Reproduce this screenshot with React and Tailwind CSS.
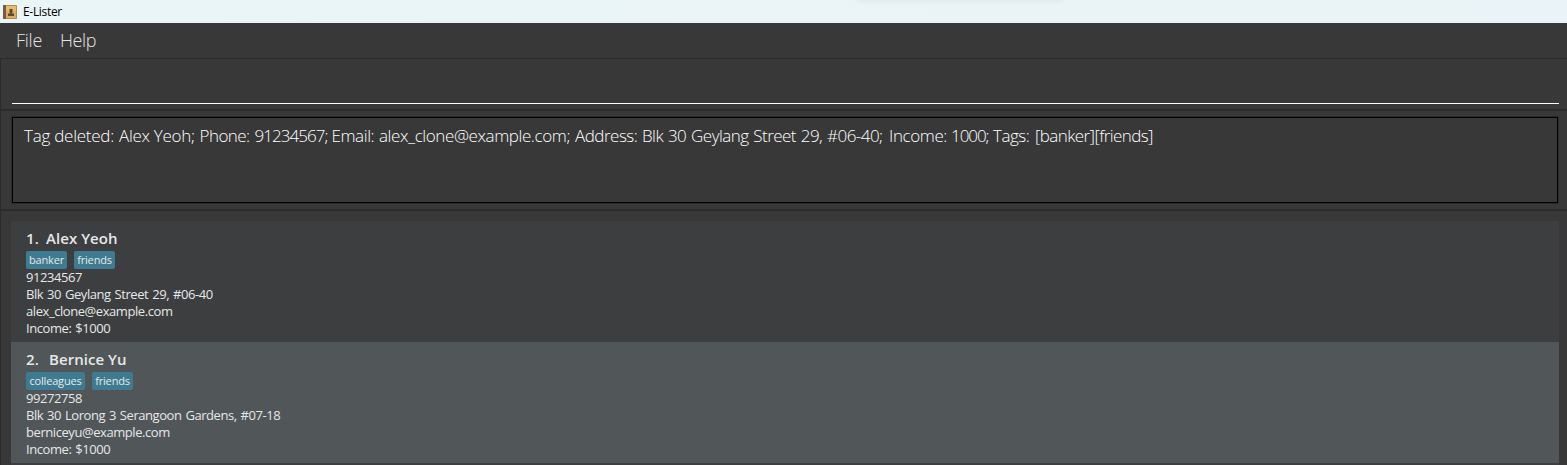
const people = [
  {
    id: '1.',
    name: 'Alex Yeoh',
    tags: [['banker', 'w-[41px]'], ['friends', 'w-[41px]']],
    lines: ['91234567', 'Blk 30 Geylang Street 29, #06-40', 'alex_clone@example.com', 'Income: $1000'],
    bg: 'bg-[#3c3e3f]',
    gap: 'w-5',
  },
  {
    id: '2.',
    name: 'Bernice Yu',
    tags: [['colleagues', 'w-[59px]'], ['friends', 'w-[41px]']],
    lines: ['99272758', 'Blk 30 Lorong 3 Serangoon Gardens, #07-18', 'berniceyu@example.com', 'Income: $1000'],
    bg: 'bg-[#515658]',
    gap: 'w-[23px]',
  },
];

const message = [
  ['Tag deleted: ', 'w-[95px] tracking-[-0.25px]'],
  ['Alex Yeoh; ', 'w-[80.5px] tracking-[-0.3px]'],
  ['Phone: ', 'w-[55px] tracking-[-0.55px]'],
  ['91234567; ', 'w-[77px] tracking-[-0.95px]'],
  ['Email: ', 'w-[47.5px] tracking-[-0.4px]'],
  ['alex_clone@example.com; ', 'w-[196px] tracking-[-0.4px]'],
  ['Address: ', 'w-[67px] tracking-[-0.5px]'],
  ['Blk 30 Geylang Street 29, #06-40; ', 'w-[247px] tracking-[-0.55px] [word-spacing:1px]'],
  ['Income: ', 'w-[62px] tracking-[-0.4px]'],
  ['1000; ', 'w-[42px] tracking-[-1.05px]'],
  ['Tags: ', 'w-[42px] tracking-[-0.5px]'],
  ['[banker][friends]', 'tracking-[-0.6px]'],
];

function BookIcon() {
  return (
    <svg className="ml-[3px] mr-[6px] h-[14px] w-[14px] shrink-0" viewBox="0 0 14 14">
      <rect width="14" height="14" rx="0.7" fill="#b98b49" />
      <rect x="3" y="1" width="10" height="12" fill="#dcab60" />
      <rect x="3" y="1" width="10" height="5" fill="#e4b970" />
      <rect width="3" height="14" rx="0.5" fill="#765c3d" />
      <path d="M6.500 4h3v3l-.6 1v.5H11V11H5V8.500h2.100V8l-.6-1z" fill="#5b4930" />
    </svg>
  );
}

function PersonCard({ person }) {
  return (
    <li className={`h-[121px] px-[15px] pt-[6px] text-[#e6e8e8] ${person.bg}`}>
      <div className="flex h-[22px] items-center text-[15px] font-semibold tracking-[0.05px]">
        <span className={person.gap}>{person.id}</span>
        <span>{person.name}</span>
      </div>
      <div className="mt-[2px] flex h-[18px] gap-[7px]">
        {person.tags.map(([tag, width]) => (
          <span key={tag} className={`flex items-center justify-center rounded-[2px] bg-[#3e7b91] pb-[2px] text-[11px] leading-none tracking-[-0.17px] ${width}`}>
            {tag}
          </span>
        ))}
      </div>
      {person.lines.map((line) => (
        <div key={line} className="h-[17px] text-[13px] leading-[17px] tracking-[-0.43px] [word-spacing:0.9px]">{line}</div>
      ))}
    </li>
  );
}

export default function App() {
  return (
    <div className="flex h-[465px] w-full flex-col overflow-hidden whitespace-nowrap bg-[#383838] font-['Open_Sans',sans-serif]">
      <header className="relative flex h-[23px] shrink-0 items-center overflow-hidden bg-linear-to-r from-[#eaf5f8] via-[#eaf4f6] via-90% to-[#eaf3f8] text-[12px] tracking-[-0.32px] text-black">
        <BookIcon />
        <span>E-Lister</span>
        <div className="absolute left-[860px] top-[-5px] h-[3px] w-[200px] shadow-[0_0_7px_2px_rgba(0,0,0,0.07)]" />
      </header>
      <nav className="flex h-[35px] shrink-0 items-center gap-[18px] pl-[16px] text-[18px] font-light text-[#e4e4e4]">
        <span className="tracking-[-0.25px]">File</span>
        <span className="tracking-[-0.4px]">Help</span>
      </nav>
      <main className="flex grow flex-col border-l border-t border-[#2b2b2b]">
        <section className="h-[52px] shrink-0 border-b-2 border-[#2b2b2b] pl-[11px] pr-2">
          <div className="h-[45px] border-b border-white" />
        </section>
        <section className="h-[100px] shrink-0 border-b-2 border-[#2b2b2b] pl-[10px] pr-2 pt-[5px]">
          <div className="h-[88px] border border-[#2b2b2b]">
            <div className="flex h-full border border-black pl-[11px] pt-[6px] text-[17px] font-light leading-[24px] text-white">
              {message.map(([text, style]) => (
                <span key={text} className={`shrink-0 whitespace-pre ${style}`}>{text}</span>
              ))}
            </div>
          </div>
        </section>
        <ul className="ml-[10px] mr-2 mt-[10px] grow bg-[#3c3e3f]">
          {people.map((person) => <PersonCard key={person.id} person={person} />)}
        </ul>
      </main>
    </div>
  );
}
